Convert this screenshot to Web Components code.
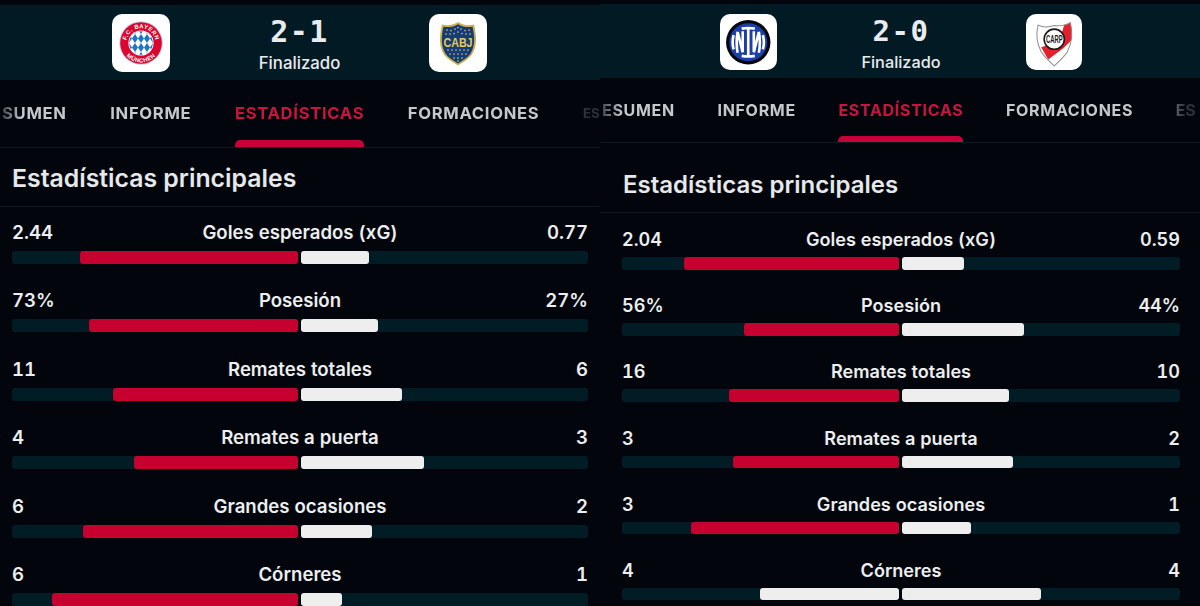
<!DOCTYPE html>
<html lang="es">
<head>
<meta charset="utf-8">
<title>Estadísticas</title>
<style>
html, body { margin: 0; background: #02060c; }
body { width: 1200px; height: 606px; overflow: hidden; display: flex; font-family: Inter, "Noto Sans", sans-serif; }
</style>
</head>
<body>
<match-panel id="left" style="--top:5px; --head-h:75px; --head-pt:0px; --tabs-h:68px; --title-h:59px; --title-pad:12px; --title-pt:2px; --title-fs:24.8px; --pad-l:12px; --pad-r:12px; --row-gap:28.4px; --row-top:17px; --bar-h:13px; --label-fs:18.6px; --label-lh:17.5px; --bar-gap:9.5px; --tab-fs:16.6px; --tab-gap:43.5px; --tab-start:2px; --last-fs:13.2px; --ind-h:7px; --logo:58px; --logo-gap-l:112px; --logo-gap-r:113px; --score-fs:30px; --status-fs:16.8px;">
  <match-header slot="header" score="2-1" status="Finalizado">
    <team-logo slot="home">
      <svg viewBox="0 0 58 58" width="100%" height="100%">
        <defs>
          <path id="bTop" d="M14.200 29a14.800 14.800 0 0 1 29.600 0"/>
          <path id="bBot" d="M9.600 29a19.400 19.400 0 0 0 38.800 0"/>
          <pattern id="bLoz" width="6" height="9" patternUnits="userSpaceOnUse" x="2" y="2">
            <rect width="6" height="9" fill="#fff"/>
            <path d="M3 0l3 4.500-3 4.500-3-4.500z" fill="#1f74c4"/>
          </pattern>
        </defs>
        <circle cx="29" cy="29" r="21.800" fill="#c3d0e8"/>
        <circle cx="29" cy="29" r="20.800" fill="#dc052d"/>
        <circle cx="29" cy="29" r="12.600" fill="#fff"/>
        <circle cx="29" cy="29" r="11.800" fill="url(#bLoz)"/>
        <text font-family="Liberation Sans, sans-serif" font-weight="700" font-size="5.800" fill="#fff" letter-spacing=".45"><textPath href="#bTop" startOffset="50%" text-anchor="middle">F.C. BAYERN</textPath></text>
        <text font-family="Liberation Sans, sans-serif" font-weight="700" font-size="5.800" fill="#fff" letter-spacing=".45"><textPath href="#bBot" startOffset="50%" text-anchor="middle">MÜNCHEN</textPath></text>
      </svg>
    </team-logo>
    <team-logo slot="away">
      <svg viewBox="0 0 58 58" width="100%" height="100%">
        <path d="M29 8c4 3 10 4 16 2.500 3 12 3 22-2 30-3 4-9 8-14 11-5-3-11-7-14-11-5-8-5-18-2-30 6 1.500 12 .5 16-2.500z" fill="#cdb04a"/>
        <path d="M29 10.200c4 2.500 9.500 3.500 14.500 2.500 2.500 10.500 2.500 19.500-2 27-2.800 3.800-8 7-12.500 9.800-4.500-2.800-9.700-6-12.500-9.800-4.500-7.500-4.500-16.500-2-27 5 1 10.500 0 14.500-2.500z" fill="#143c7c"/>
        <g fill="#d8bc55">
          <circle cx="18" cy="16" r=".85"/><circle cx="22" cy="16.500" r=".85"/><circle cx="26" cy="15" r=".85"/><circle cx="29" cy="13.500" r=".85"/><circle cx="32" cy="15" r=".85"/><circle cx="36" cy="16.500" r=".85"/><circle cx="40" cy="16" r=".85"/>
          <circle cx="17" cy="20" r=".85"/><circle cx="21" cy="20" r=".85"/><circle cx="25" cy="19.500" r=".85"/><circle cx="29" cy="18" r=".85"/><circle cx="33" cy="19.500" r=".85"/><circle cx="37" cy="20" r=".85"/><circle cx="41" cy="20" r=".85"/>
          <circle cx="19" cy="36" r=".85"/><circle cx="23" cy="36" r=".85"/><circle cx="27" cy="36" r=".85"/><circle cx="31" cy="36" r=".85"/><circle cx="35" cy="36" r=".85"/><circle cx="39" cy="36" r=".85"/>
          <circle cx="21" cy="40" r=".85"/><circle cx="25" cy="40" r=".85"/><circle cx="29" cy="40" r=".85"/><circle cx="33" cy="40" r=".85"/><circle cx="37" cy="40" r=".85"/>
          <circle cx="25" cy="44" r=".85"/><circle cx="29" cy="44" r=".85"/><circle cx="33" cy="44" r=".85"/><circle cx="29" cy="47" r=".85"/>
        </g>
        <text x="29" y="32.500" text-anchor="middle" font-family="Liberation Sans, sans-serif" font-weight="700" font-size="12" fill="#ecca4e" textLength="29" lengthAdjust="spacingAndGlyphs">CABJ</text>
      </svg>
    </team-logo>
  </match-header>
  <tab-strip slot="tabs" first="SUMEN"></tab-strip>
  <panel-title slot="title">Estadísticas principales</panel-title>
  <stat-row label="Goles esperados (xG)" home="2.44" away="0.77" home-w="218" away-w="68"></stat-row>
  <stat-row label="Posesión" home="73%" away="27%" home-w="209" away-w="77"></stat-row>
  <stat-row label="Remates totales" home="11" away="6" home-w="185" away-w="101"></stat-row>
  <stat-row label="Remates a puerta" home="4" away="3" home-w="164" away-w="123"></stat-row>
  <stat-row label="Grandes ocasiones" home="6" away="2" home-w="215" away-w="71"></stat-row>
  <stat-row label="Córneres" home="6" away="1" home-w="246" away-w="41"></stat-row>
</match-panel>

<match-panel id="right" style="--top:4px; --head-h:74px; --head-pt:2px; --tabs-h:65px; --title-h:70px; --title-pad:23px; --title-pt:14px; --title-fs:24px; --pad-l:22px; --pad-r:20px; --row-gap:26.7px; --row-top:17px; --bar-h:12.500px; --label-fs:18.100px; --label-lh:18px; --bar-gap:9px; --tab-fs:16px; --tab-gap:42.500px; --tab-start:2px; --last-fs:16px; --ind-h:6px; --logo:56.500px; --logo-gap-l:120px; --logo-gap-r:118px; --score-fs:29px; --status-fs:16.300px;">
  <match-header slot="header" score="2-0" status="Finalizado">
    <team-logo slot="home">
      <svg viewBox="0 0 56 56" width="100%" height="100%">
        <circle cx="28" cy="28" r="22" fill="#04070f"/>
        <circle cx="28" cy="28" r="18.800" fill="#1b3fa6"/>
        <g fill="none" stroke="#fff" stroke-width="2.600">
          <path d="M21.500 14.500q6.500-1.200 13 0M21.500 41.500q6.500 1.200 13 0M28 15v26"/>
          <path d="M13.500 21q-2 7 0 14"/>
          <path d="M42.500 21q2 7 0 14"/>
          <path d="M17.500 17.500q-2 10.500 0 21M17.500 18l5 20M22.500 17v21"/>
          <path d="M38.500 17.500q2 10.500 0 21M38.500 18l-5 20M33.500 17v21"/>
        </g>
      </svg>
    </team-logo>
    <team-logo slot="away">
      <svg viewBox="0 0 56 56" width="100%" height="100%">
        <defs>
          <clipPath id="rShield"><path d="M12 11c5 2.500 11 2 16 .5 5 .5 11 0 16-3 2.500 10 1.500 20-3 29-3 5-8 9.500-13 14-5-4.500-10-9-13-14-4.500-9-5.500-17-3-26.500z"/></clipPath>
        </defs>
        <path d="M12 11c5 2.500 11 2 16 .5 5 .5 11 0 16-3 2.500 10 1.500 20-3 29-3 5-8 9.500-13 14-5-4.500-10-9-13-14-4.500-9-5.500-17-3-26.500z" fill="#fff"/>
        <g clip-path="url(#rShield)">
          <path d="M39 7l8 0 0 17-10 10-15 11-7-12 12-4 9-12z" fill="#e3202c"/>
        </g>
        <path d="M12 11c5 2.500 11 2 16 .5 5 .5 11 0 16-3 2.500 10 1.500 20-3 29-3 5-8 9.500-13 14-5-4.500-10-9-13-14-4.500-9-5.500-17-3-26.500z" fill="none" stroke="#8c8c8c" stroke-width="1"/>
        <circle cx="28" cy="25" r="10" fill="#fff" stroke="#1b1b1b" stroke-width="1.600"/>
        <text x="28" y="28.700" text-anchor="middle" font-family="Liberation Sans, sans-serif" font-weight="700" font-size="10" fill="#1b1b1b" textLength="16.500" lengthAdjust="spacingAndGlyphs">CARP</text>
      </svg>
    </team-logo>
  </match-header>
  <tab-strip slot="tabs" first="ESUMEN"></tab-strip>
  <panel-title slot="title">Estadísticas principales</panel-title>
  <stat-row label="Goles esperados (xG)" home="2.04" away="0.59" home-w="215" away-w="62"></stat-row>
  <stat-row label="Posesión" home="56%" away="44%" home-w="155" away-w="122"></stat-row>
  <stat-row label="Remates totales" home="16" away="10" home-w="170" away-w="107"></stat-row>
  <stat-row label="Remates a puerta" home="3" away="2" home-w="166" away-w="111"></stat-row>
  <stat-row label="Grandes ocasiones" home="3" away="1" home-w="208" away-w="69"></stat-row>
  <stat-row label="Córneres" home="4" away="4" home-w="139" away-w="139" even></stat-row>
</match-panel>

<script>
class MatchPanel extends HTMLElement {
    constructor() {
        super();
        this.attachShadow({ mode: 'open' }).innerHTML = `<style>
:host { display: block; width: 600px; height: 606px; overflow: hidden; padding-top: var(--top); box-sizing: border-box; }
.rows { display: flex; flex-direction: column; gap: var(--row-gap); padding: var(--row-top) var(--pad-r) 0 var(--pad-l); }
</style>
<slot name="header"></slot><slot name="tabs"></slot><slot name="title"></slot>
<div class="rows"><slot></slot></div>`
    }
}
class MatchHeader extends HTMLElement {
    constructor() {
        super();
        this.attachShadow({ mode: 'open' }).innerHTML = `<style>
:host { display: grid; grid-template-columns: var(--logo) 1fr var(--logo); align-items: center; height: var(--head-h); box-sizing: border-box; background: #011a24; padding: var(--head-pt) var(--logo-gap-r) 0 var(--logo-gap-l); }
.mid { display: flex; flex-direction: column; align-items: center; color: #e9ecee; }
.score { font: 700 var(--score-fs)/34px "DejaVu Sans Mono", monospace; letter-spacing: 1.5px; margin-top: 2px; }
.status { font-size: var(--status-fs); font-weight: 500; line-height: 20px; margin-top: 4px; }
</style>
<slot name="home"></slot>
<div class="mid"><div class="score"></div><div class="status"></div></div>
<slot name="away"></slot>`
    }
    connectedCallback() {
        this.shadowRoot.querySelector('.score').textContent = this.getAttribute('score')
        this.shadowRoot.querySelector('.status').textContent = this.getAttribute('status')
    }
}
class TeamLogo extends HTMLElement {
    constructor() {
        super();
        this.attachShadow({ mode: 'open' }).innerHTML = `<style>
:host { display: block; width: var(--logo); height: var(--logo); background: #fff; border-radius: 10px; overflow: hidden; }
</style><slot></slot>`
    }
}
class TabStrip extends HTMLElement {
    connectedCallback() {
        // la tira está recortada por el borde de la captura: solo se ve esto de la primera y la última pestaña
        const tabs = [this.getAttribute('first'), 'INFORME', 'ESTADÍSTICAS', 'FORMACIONES', 'ES']
        this.attachShadow({ mode: 'open' }).innerHTML = `<style>
:host { display: block; height: var(--tabs-h); box-sizing: border-box; border-bottom: 1px solid #0c1a22; overflow: hidden; }
.list { display: flex; gap: var(--tab-gap); height: 100%; padding-left: var(--tab-start); width: max-content; }
.fade { height: 100%; -webkit-mask-image: linear-gradient(90deg, rgba(0,0,0,.25) 0, #000 22px, #000 555px, rgba(0,0,0,.22) 585px); mask-image: linear-gradient(90deg, rgba(0,0,0,.25) 0, #000 22px, #000 555px, rgba(0,0,0,.22) 585px); }
.tab { position: relative; display: flex; align-items: center; height: 100%; padding-bottom: 1px; box-sizing: border-box; font-size: var(--tab-fs); font-weight: 700; letter-spacing: .7px; color: #c6c9cc; white-space: nowrap; }
.tab:last-child { font-size: var(--last-fs); letter-spacing: 0; }
.tab.on { color: #c9143f; }
.tab.on::after { content: ''; position: absolute; left: 0; right: 0; bottom: 0; height: var(--ind-h); background: #c8003a; border-radius: 5px 5px 0 0; }
</style>
<div class="fade"><div class="list">${tabs.map(t => `<div class="tab${t === 'ESTADÍSTICAS' ? ' on' : ''}">${t}</div>`).join('')}</div></div>`
    }
}
class PanelTitle extends HTMLElement {
    constructor() {
        super();
        this.attachShadow({ mode: 'open' }).innerHTML = `<style>
:host { display: flex; align-items: center; height: var(--title-h); box-sizing: border-box; padding: var(--title-pt) 0 0 var(--title-pad); border-bottom: 1px solid #0c1a22; font-size: var(--title-fs); font-weight: 600; color: #e6e8ea; }
</style><slot></slot>`
    }
}
class StatRow extends HTMLElement {
    constructor() {
        super();
        this.attachShadow({ mode: 'open' }).innerHTML = `<style>
:host { display: block; color: #eceeef; font-size: var(--label-fs); font-weight: 600; }
.head { display: grid; grid-template-columns: 1fr auto 1fr; line-height: var(--label-lh); font-variant-numeric: tabular-nums; }
.away { text-align: right; }
.bars { display: grid; grid-template-columns: calc(50% - 2px) 1fr; gap: 3px; margin-top: var(--bar-gap); height: var(--bar-h); }
.half { display: flex; background: #021c26; border-radius: 3px; }
.half.l { justify-content: flex-end; }
.fill { height: 100%; border-radius: 3px; background: #eeeeee; }
.fill.red { background: #c6002f; }
</style>
<div class="head"><span class="home"></span><span class="label"></span><span class="away"></span></div>
<div class="bars"><div class="half l"><div class="fill hw"></div></div><div class="half"><div class="fill aw"></div></div></div>`
    }
    connectedCallback() {
        const root = this.shadowRoot
        root.querySelector('.home').textContent = this.getAttribute('home')
        root.querySelector('.away').textContent = this.getAttribute('away')
        root.querySelector('.label').textContent = this.getAttribute('label')
        const hw = root.querySelector('.hw')
        hw.style.width = `${this.getAttribute('home-w')}px`
        if (!this.hasAttribute('even')) { hw.classList.add('red') } // empate: las dos barras blancas
        root.querySelector('.aw').style.width = `${this.getAttribute('away-w')}px`
    }
}
customElements.define('match-panel', MatchPanel)
customElements.define('match-header', MatchHeader)
customElements.define('team-logo', TeamLogo)
customElements.define('tab-strip', TabStrip)
customElements.define('panel-title', PanelTitle)
customElements.define('stat-row', StatRow)
</script>
</body>
</html>
